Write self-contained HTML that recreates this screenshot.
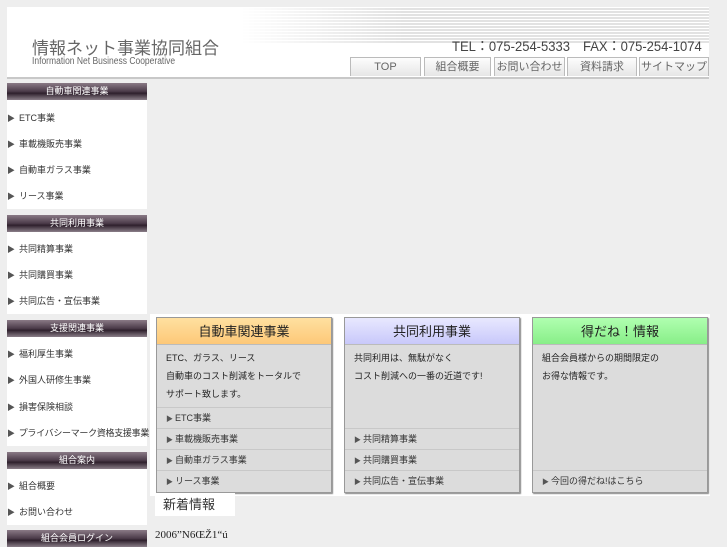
<!DOCTYPE html>
<html><head><meta charset="utf-8"><style>
body{margin:0;width:727px;height:545px;background:#eeeeee;font-family:"Liberation Sans","Noto Sans CJK JP",sans-serif;position:relative;overflow:hidden}
.a{position:absolute;white-space:nowrap}
.hdr{left:7px;top:7px;width:702px;height:70px;background:#fff;border-bottom:2px solid #c8c8c8}
.stripes{left:240px;top:7px;width:469px;height:37px;background:repeating-linear-gradient(#fff 0 1px,#e2e2e2 1px 3px);-webkit-mask:linear-gradient(90deg,transparent,#000 35%);mask:linear-gradient(90deg,transparent,#000 35%)}
.tab{top:57px;height:19px;background:linear-gradient(#fdfdfd,#e6e6e6);border:1px solid #bbb;border-bottom:none;font-size:11px;color:#666;text-align:center;line-height:19px;box-sizing:border-box;overflow:hidden}
.side{left:7px;width:140px;background:#fff}
.sh{left:7px;width:140px;height:17px;background:linear-gradient(#8a7a86,#4a3a48 50%,#2e202c 60%,#8a7e88);color:#fff;font-size:9px;text-align:center;line-height:17px}
.si{left:7px;font-size:9px;color:#333;line-height:12px}
.si:before{content:"▶";font-size:8px;color:#555;margin-right:4px}
.p{top:317px;width:176px;height:176px;background:#dcdcdc;border:1px solid #999;box-sizing:border-box;box-shadow:1px 1px 1px #888}
.pt{height:26px;border-bottom:1px solid #bbb;text-align:center;font-size:13px;line-height:27px;color:#222}
.pb{font-size:9px;color:#222;line-height:18px;padding:4px 0 0 9px}
.pl{position:absolute;left:0;width:174px;height:21px;border-top:1px solid #c8c8c8;font-size:9px;color:#333;line-height:21px;padding-left:9px;box-sizing:border-box}
.pl:before{content:"▶ ";font-size:7px;color:#555}
</style></head><body>
<div class="a hdr"></div>
<div class="a stripes"></div>
<div class="a" style="left:32px;top:34px;font-size:17px;color:#666">情報ネット事業協同組合</div>
<div class="a" style="left:32px;top:56px;font-size:10px;color:#666;transform:scaleX(0.85);transform-origin:left">Information Net Business Cooperative</div>
<div class="a" style="left:452px;top:36px;font-size:14px;color:#444;transform:scaleX(0.93);transform-origin:left">TEL：075-254-5333　FAX：075-254-1074</div>
<div class="a tab" style="left:350px;width:71px">TOP</div>
<div class="a tab" style="left:424px;width:67px">組合概要</div>
<div class="a tab" style="left:494px;width:71px">お問い合わせ</div>
<div class="a tab" style="left:567px;width:70px">資料請求</div>
<div class="a tab" style="left:639px;width:70px">サイトマップ</div>

<div class="a side" style="top:83px;height:126px"></div>
<div class="a side" style="top:215px;height:99px"></div>
<div class="a side" style="top:320px;height:126px"></div>
<div class="a side" style="top:452px;height:73px"></div>
<div class="a sh" style="top:83px">自動車関連事業</div>
<div class="a si" style="top:112px">ETC事業</div>
<div class="a si" style="top:138px">車載機販売事業</div>
<div class="a si" style="top:164px">自動車ガラス事業</div>
<div class="a si" style="top:190px">リース事業</div>
<div class="a sh" style="top:215px">共同利用事業</div>
<div class="a si" style="top:243px">共同精算事業</div>
<div class="a si" style="top:269px">共同購買事業</div>
<div class="a si" style="top:295px">共同広告・宣伝事業</div>
<div class="a sh" style="top:320px">支援関連事業</div>
<div class="a si" style="top:348px">福利厚生事業</div>
<div class="a si" style="top:374px">外国人研修生事業</div>
<div class="a si" style="top:401px">損害保険相談</div>
<div class="a si" style="top:427px;letter-spacing:-0.3px">プライバシーマーク資格支援事業</div>
<div class="a sh" style="top:452px">組合案内</div>
<div class="a si" style="top:480px">組合概要</div>
<div class="a si" style="top:506px">お問い合わせ</div>
<div class="a sh" style="top:530px">組合会員ログイン</div>

<div class="a" style="left:150px;top:314px;width:560px;height:182px;background:#fff"></div>
<div class="a p" style="left:156px"><div class="pt" style="background:linear-gradient(#ffe0a0,#fdc878)">自動車関連事業</div>
<div class="pb">ETC、ガラス、リース<br>自動車のコスト削減をトータルで<br>サポート致します。</div>
<div class="pl" style="top:89px">ETC事業</div><div class="pl" style="top:110px">車載機販売事業</div><div class="pl" style="top:131px">自動車ガラス事業</div><div class="pl" style="top:152px">リース事業</div></div>
<div class="a p" style="left:344px"><div class="pt" style="background:linear-gradient(#e8e8ff,#c8c8fa)">共同利用事業</div>
<div class="pb">共同利用は、無駄がなく<br>コスト削減への一番の近道です!</div>
<div class="pl" style="top:110px">共同精算事業</div><div class="pl" style="top:131px">共同購買事業</div><div class="pl" style="top:152px">共同広告・宣伝事業</div></div>
<div class="a p" style="left:532px"><div class="pt" style="background:linear-gradient(#b0ffb0,#88ee88)">得だね！情報</div>
<div class="pb">組合会員様からの期間限定の<br>お得な情報です。</div>
<div class="pl" style="top:152px">今回の得だね!はこちら</div></div>

<div class="a" style="left:155px;top:493px;width:80px;height:23px;background:#fff;font-size:13px;color:#333;line-height:23px;padding-left:8px;box-sizing:border-box">新着情報</div>
<div class="a" style="left:155px;top:529px;font-family:'Liberation Serif',serif;font-size:11px;color:#222">2006”N6ŒŽ1“ú</div>
</body></html>
